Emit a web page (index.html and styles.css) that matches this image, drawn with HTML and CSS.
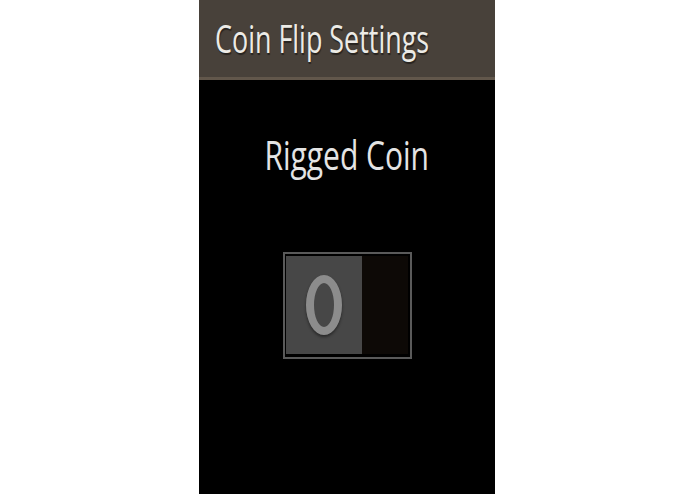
FILE: index.html
```html
<!DOCTYPE html>
<html lang="en">
<head>
    <meta charset="UTF-8">
    <meta name="viewport" content="width=device-width, initial-scale=1.0">
    <title>Coin Flip Settings</title>
    <link rel="stylesheet" href="styles.css">
</head>
<body>
    <div class="screen">
        <div class="header">
            <h1 class="title"><span>Coin Flip Settings</span></h1>
        </div>

        <div class="content">
            <div class="setting-label"><span>Rigged Coin</span></div>

            <!-- rigged toggle, currently off -->
            <div class="toggle">
                <div class="toggle-thumb">
                    <span class="toggle-ring"></span>
                </div>
                <div class="toggle-track"></div>
            </div>
        </div>
    </div>
</body>
</html>
```

FILE: styles.css
```css
* {
    margin: 0;
    padding: 0;
    box-sizing: border-box;
}

body {
    font-family: 'Open Sans', 'Noto Sans', sans-serif;
    background: #ffffff;
    height: 494px;
    overflow: hidden;
    display: flex;
    justify-content: center;
}

.screen {
    width: 296px;
    height: 494px;
    margin-left: -1px;
    background: #000000;
    display: flex;
    flex-direction: column;
}

.header {
    height: 80px;
    background: #48413a;
    border-bottom: 3px solid #62574b;
    padding: 18px 0 0 16px;
}

.title {
    font-size: 39px;
    font-weight: 500;
    line-height: 1;
    color: #ecebe6;
    white-space: nowrap;
}

.title span {
    display: inline-block;
    transform: scaleX(0.69);
    transform-origin: left center;
    text-shadow: 1px 2px 1px rgba(0, 0, 0, 0.45);
}

.content {
    flex: 1;
    display: flex;
    flex-direction: column;
    align-items: center;
    padding-top: 55px;
}

.setting-label {
    font-size: 40px;
    line-height: 1;
    color: #e4e4e4;
    white-space: nowrap;
}

.setting-label span {
    display: inline-block;
    transform: scaleX(0.75);
}

.toggle {
    margin-top: 77px;
    width: 129px;
    height: 107px;
    border: 2px solid #5a5a5a;
    padding: 2px 2px 3px 1px;
    background: #000000;
    display: flex;
}

.toggle-thumb {
    width: 76px;
    background: #474747;
    display: flex;
    align-items: center;
    justify-content: center;
}

.toggle-ring {
    width: 36px;
    height: 60px;
    border: 8px solid #8c8c8c;
    border-radius: 50%;
    box-shadow: 0 2px 3px rgba(0, 0, 0, 0.45);
}

.toggle-track {
    flex: 1;
    background: #0d0906;
}
```
